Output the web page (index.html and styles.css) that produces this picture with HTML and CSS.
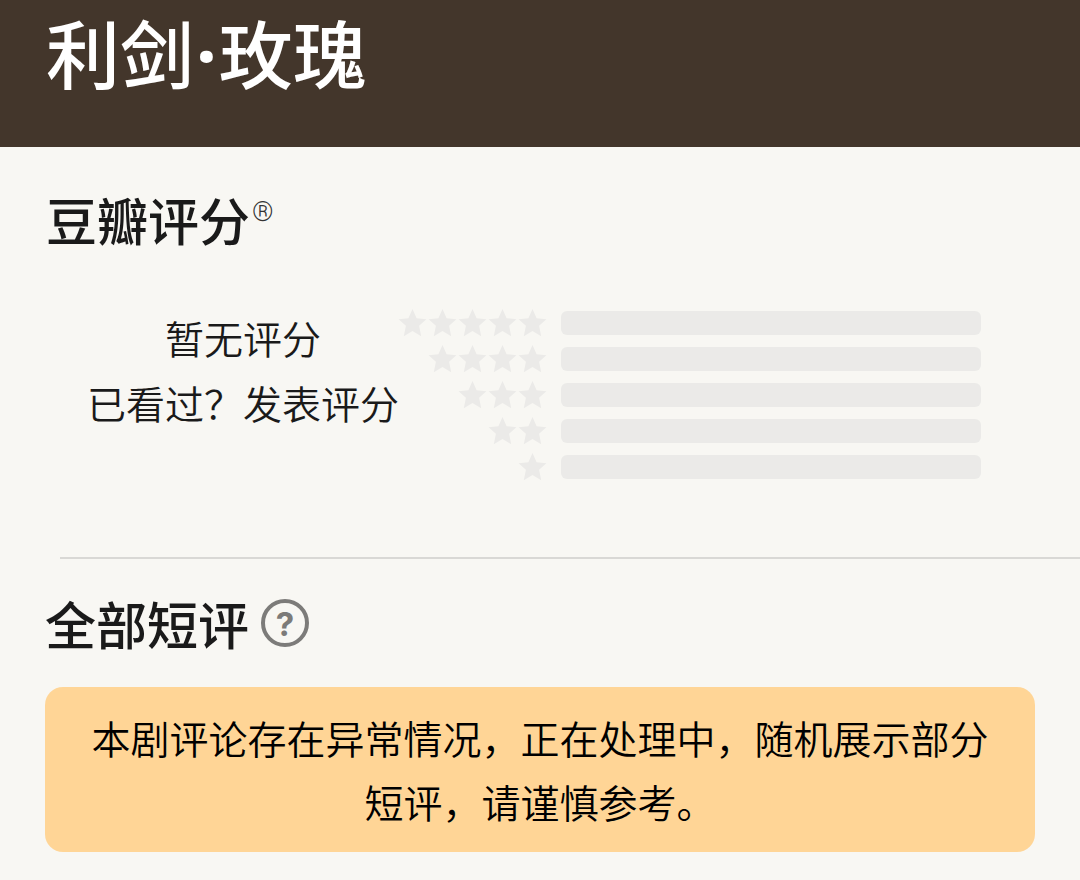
FILE: index.html
```html
<!DOCTYPE html>
<html lang="zh-CN">
<head>
    <meta charset="UTF-8">
    <meta name="viewport" content="width=device-width, initial-scale=1.0">
    <title>利剑·玫瑰</title>
    <link rel="stylesheet" href="styles.css">
</head>
<body>
    <svg class="sprite" aria-hidden="true">
        <symbol id="star" viewBox="0 0 30 30" overflow="visible">
            <path d="M13.5 1L17.6 10.2L27.4 11.2L20.1 17.8L22.2 28.2L13.5 22.9L4.8 28.2L6.9 17.8L-0.4 11.2L9.4 10.2Z"/>
        </symbol>
    </svg>

    <header class="title-bar">
        <h1>利剑<span class="dot">·</span>玫瑰</h1>
    </header>

    <main>
        <section class="rating">
            <h2>豆瓣评分<sup>®</sup></h2>
            <div class="rating-body">
                <div class="rating-text">
                    <p>暂无评分</p>
                    <p>已看过？<a href="#">发表评分</a></p>
                </div>
                <div class="chart">
                    <div class="stars"><svg><use href="#star"/></svg><svg><use href="#star"/></svg><svg><use href="#star"/></svg><svg><use href="#star"/></svg><svg><use href="#star"/></svg></div>
                    <div class="bar"></div>
                    <div class="stars"><svg><use href="#star"/></svg><svg><use href="#star"/></svg><svg><use href="#star"/></svg><svg><use href="#star"/></svg></div>
                    <div class="bar"></div>
                    <div class="stars"><svg><use href="#star"/></svg><svg><use href="#star"/></svg><svg><use href="#star"/></svg></div>
                    <div class="bar"></div>
                    <div class="stars"><svg><use href="#star"/></svg><svg><use href="#star"/></svg></div>
                    <div class="bar"></div>
                    <div class="stars"><svg><use href="#star"/></svg></div>
                    <div class="bar"></div>
                </div>
            </div>
        </section>

        <section class="comments">
            <div class="comments-head">
                <h2>全部短评</h2>
                <button type="button" class="help" aria-label="短评说明">?</button>
            </div>
            <p class="notice">本剧评论存在异常情况，正在处理中，随机展示部分短评，请谨慎参考。</p>
        </section>
    </main>
</body>
</html>
```

FILE: styles.css
```css
* {
    box-sizing: border-box;
}
body {
    margin: 0;
    background-color: #f8f7f3;
    color: #1a1a1a;
    font-family: "Noto Sans CJK SC", sans-serif;
}
h1, h2, p {
    margin: 0;
    font-weight: 500;
}
.sprite {
    display: none;
}
.title-bar {
    padding: 3px 46px 48px;
    background-color: #43362b;
    color: #fff;
}
h1 {
    font-size: 74px;
    line-height: 96px;
}
.dot {
    margin: 0 2px;
    font-family: "Noto Sans", sans-serif;
    font-weight: 700;
    line-height: 1;
}
h2 {
    font-size: 51px;
    line-height: 72px;
}
.rating {
    padding: 36px 0 0 46px;
}
sup {
    margin-left: 2px;
    font-family: Roboto, sans-serif;
    font-size: 27px;
    font-weight: 300;
    line-height: 1;
    color: #333;
    vertical-align: 20px;
}
.rating-body {
    display: flex;
    align-items: flex-start;
    margin-left: 14px;
    padding: 50px 99px 75px 0;
    border-bottom: 2px solid #d9d8d5;
}
.rating-text {
    flex: none;
    margin-left: 27px;
    font-size: 39px;
    line-height: 65px;
    text-align: center;
}
.rating-text p {
    font-weight: 350;
}
.rating-text a {
    color: inherit;
    text-decoration: none;
}
.chart {
    flex: 1;
    display: grid;
    grid-template-columns: 150px 1fr;
    gap: 6px 12px;
    margin-top: 3px;
}
.stars {
    display: flex;
    justify-content: flex-end;
}
.stars svg {
    width: 30px;
    height: 30px;
    overflow: visible;
    fill: #ebeae8;
}
.bar {
    align-self: center;
    height: 24px;
    border-radius: 6px;
    background-color: #ebeae8;
}
.comments {
    padding: 28px 45px;
}
.comments-head {
    display: flex;
    align-items: center;
    gap: 12px;
}
.help {
    width: 48px;
    height: 48px;
    padding: 2px 0 0;
    border: 4px solid #7c7b79;
    border-radius: 50%;
    background: none;
    color: #7c7b79;
    font: bold 33px/38px Inter, sans-serif;
}
.notice {
    margin-top: 28px;
    padding: 18px 46px 19px;
    border-radius: 18px;
    background-color: #ffd596;
    color: #000;
    font-size: 39px;
    font-weight: 350;
    line-height: 64px;
    text-align: center;
}
```
